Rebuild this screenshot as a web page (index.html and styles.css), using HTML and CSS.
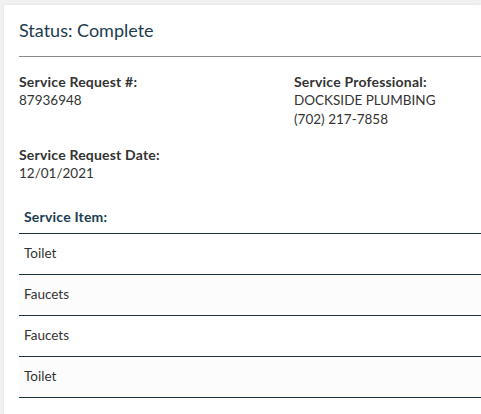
FILE: index.html
```html
<!DOCTYPE html>
<html>
<head>
<meta charset="utf-8">
<link rel="stylesheet" href="styles.css">
</head>
<body>
<div class="card">
  <h1 class="title">Status: Complete</h1>
  <hr class="divider">
  <div class="info">
    <div class="field">
      <div class="label">Service Request #:</div>
      <div class="value">87936948</div>
    </div>
    <div class="field">
      <div class="label">Service Professional:</div>
      <div class="value">DOCKSIDE PLUMBING</div>
      <div class="value">(702) 217-7858</div>
    </div>
    <div class="field">
      <div class="label">Service Request Date:</div>
      <div class="value">12/01/2021</div>
    </div>
  </div>
  <table class="items">
    <thead>
      <tr><th>Service Item:</th></tr>
    </thead>
    <tbody>
      <tr><td>Toilet</td></tr>
      <tr><td>Faucets</td></tr>
      <tr><td>Faucets</td></tr>
      <tr><td>Toilet</td></tr>
    </tbody>
  </table>
</div>
</body>
</html>
```
FILE: styles.css
```css
html, body {
  margin: 0;
  padding: 0;
}
body {
  background: #f1f1f1;
  font-family: "Lato", "Open Sans", sans-serif;
  color: #333;
  overflow: hidden;
}
.card {
  margin: 5px 0 0 4px;
  background: #fff;
  padding: 13px 0 16px 15px;
  box-shadow: 0 0 3px rgba(0,0,0,0.08);
  border-radius: 2px 0 0 0;
}
.title {
  margin: 0;
  font-size: 18px;
  line-height: 24px;
  font-weight: 400;
  color: #1d3c4e;
}
.divider {
  margin: 14px 0 0 0;
  border: 0;
  border-top: 1px solid #8a8a8a;
  height: 0;
}
.info {
  display: grid;
  grid-template-columns: 275px 1fr;
  row-gap: 16px;
  margin-top: 15px;
  font-size: 13.5px;
  line-height: 19px;
}
.label {
  font-size: 14px;
  font-weight: 700;
  letter-spacing: 0.2px;
  color: #333;
}
.value {
  color: #333;
}
.items {
  width: 100%;
  border-collapse: collapse;
  margin-top: 14px;
  font-size: 13.5px;
  line-height: 19px;
}
.items th {
  text-align: left;
  font-size: 14px;
  letter-spacing: 0.2px;
  font-weight: 700;
  color: #1a3d52;
  padding: 10px 5px 7px;
  border-bottom: 1px solid #1c3440;
}
.items td {
  padding: 10px 5px 11px;
  color: #333;
  border-bottom: 1px solid #1c3440;
}
.items tbody tr:nth-child(even) td {
  background: #fcfcfc;
}
```
